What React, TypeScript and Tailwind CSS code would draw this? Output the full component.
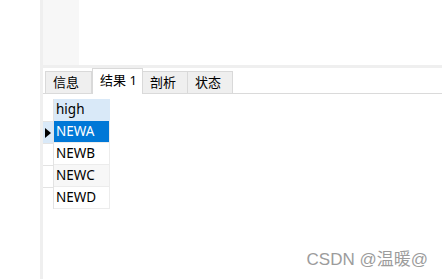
import clsx from "clsx";

const font = { fontFamily: '"Noto Sans", "Noto Sans CJK SC", sans-serif' };

const tabs = ["信息", "结果 1", "剖析", "状态"];
const rows = ["NEWA", "NEWB", "NEWC", "NEWD"];

export default function App() {
  return (
    <div
      className="relative flex h-[279px] w-[442px] overflow-hidden bg-white text-[13px] text-black"
      style={font}
    >
      {/* left margin + splitter */}
      <div className="w-[40px] shrink-0 bg-white" />
      <div className="w-[3px] shrink-0 bg-[#efefef]" />

      <div className="flex flex-1 flex-col">
        {/* editor area */}
        <div className="flex h-[65px]">
          <div className="w-[36px] bg-[#f7f7f7]" />
          <div className="flex-1 bg-white" />
        </div>
        <div className="h-[3px] bg-[#efefef]" />

        {/* tab strip */}
        <div className="flex h-[26px] items-end border-b border-[#dadada] pl-[2px]">
          {tabs.map((t, i) => (
            <div
              key={t}
              className={clsx(
                "flex items-center border border-b-0 border-[#d9d9d9] pl-[7px] text-[13px] leading-none",
                i === 1
                  ? "-mb-px h-[26px] w-[51px] bg-white pb-[2px]"
                  : "h-[22px] w-[46px] bg-[#efefef]",
                i > 1 && "-ml-px",
                i === 0 && "w-[47px]"
              )}
            >
              {t}
            </div>
          ))}
        </div>

        {/* result grid */}
        <div className="mt-[5px] flex flex-col">
          <div className="flex h-[22px]">
            <div className="w-[11px] border-r border-[#e3e3e3] bg-white" />
            <div className="flex w-[56px] items-center bg-[#d9e9f8] pl-[2px] pb-[1px] text-[13.5px]">
              high
            </div>
          </div>
          {rows.map((r, i) => (
            <div key={r} className="flex h-[22px]">
              <div
                className={clsx(
                  "flex w-[11px] items-center border-r border-t border-[#e3e3e3]",
                  i === 0 ? "bg-[#d9e9f8]" : "bg-white"
                )}
              >
                {i === 0 && (
                  <svg width="8" height="12" viewBox="0 0 8 12" className="ml-[1px]">
                    <path d="M1 1 L7 6 L1 11 Z" fill="#000" />
                  </svg>
                )}
              </div>
              <div
                className={clsx(
                  "flex w-[56px] items-center border-r border-b border-[#ececec] pl-[2px] pb-[1px] text-[13.5px]",
                  i === 0 && "border-[#0078d7] bg-[#0078d7] text-white",
                  i === 2 && "bg-[#f7f7f7]"
                )}
              >
                {r}
              </div>
            </div>
          ))}
        </div>
      </div>

      {/* watermark */}
      <div
        className="absolute right-[14px] bottom-[11px] text-[17px] leading-none text-[#9c9c9c]"
        style={{ fontFamily: '"Liberation Sans", "Noto Sans CJK SC", sans-serif' }}
      >
        CSDN @温暖@
      </div>
    </div>
  );
}
